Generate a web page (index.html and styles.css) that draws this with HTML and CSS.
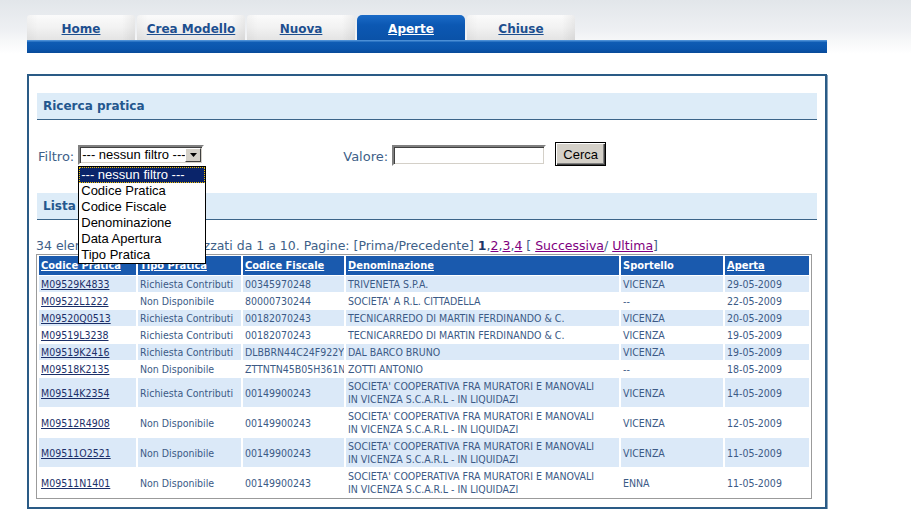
FILE: index.html
```html
<!DOCTYPE html>
<html>
<head>
<meta charset="utf-8">
<link rel="stylesheet" href="styles.css">
</head>
<body>
<div class="top">
  <div class="tabs">
    <div class="tab"><a href="#">Home</a></div>
    <div class="tab"><a href="#">Crea Modello</a></div>
    <div class="tab"><a href="#">Nuova</a></div>
    <div class="tab active"><a href="#">Aperte</a></div>
    <div class="tab"><a href="#">Chiuse</a></div>
  </div>
  <div class="bar"></div>
</div>

<div class="panel">
  <div class="section">Ricerca pratica</div>
  <div class="filters">
    <div class="group">
      <span class="label">Filtro:</span>
      <div class="select-wrap">
        <div class="select">
          <span class="select-text">--- nessun filtro ---</span>
          <span class="select-btn"><svg width="7" height="4" viewBox="0 0 7 4"><path d="M0 0h7L3.5 4z" fill="#000"/></svg></span>
        </div>
        <ul class="options">
          <li class="sel">--- nessun filtro ---</li>
          <li>Codice Pratica</li>
          <li>Codice Fiscale</li>
          <li>Denominazione</li>
          <li>Data Apertura</li>
          <li>Tipo Pratica</li>
        </ul>
      </div>
    </div>
    <div class="group valore">
      <span class="label">Valore:</span>
      <div class="input"></div>
      <div class="button">Cerca</div>
    </div>
  </div>

  <div class="section lista">Lista pratiche</div>

  <div class="pager">34 elementi trovati, visualizzati da 1 a 10. Pagine: [Prima/Precedente] <b>1</b>,<a href="#">2</a>,<a href="#">3</a>,<a href="#">4</a> [ <a href="#">Successiva</a>/ <a href="#">Ultima</a>]</div>

  <table class="grid">
    <colgroup>
      <col class="c1"><col class="c2"><col class="c3"><col class="c4"><col class="c5"><col class="c6">
    </colgroup>
    <thead>
      <tr>
        <th><a href="#">Codice Pratica</a></th>
        <th><a href="#">Tipo Pratica</a></th>
        <th><a href="#">Codice Fiscale</a></th>
        <th><a href="#">Denominazione</a></th>
        <th>Sportello</th>
        <th><a href="#">Aperta</a></th>
      </tr>
    </thead>
    <tbody>
      <tr class="alt"><td><a href="#">M09529K4833</a></td><td>Richiesta Contributi</td><td>00345970248</td><td>TRIVENETA S.P.A.</td><td>VICENZA</td><td>29-05-2009</td></tr>
      <tr><td><a href="#">M09522L1222</a></td><td>Non Disponibile</td><td>80000730244</td><td>SOCIETA' A R.L. CITTADELLA</td><td>--</td><td>22-05-2009</td></tr>
      <tr class="alt"><td><a href="#">M09520Q0513</a></td><td>Richiesta Contributi</td><td>00182070243</td><td>TECNICARREDO DI MARTIN FERDINANDO &amp; C.</td><td>VICENZA</td><td>20-05-2009</td></tr>
      <tr><td><a href="#">M09519L3238</a></td><td>Richiesta Contributi</td><td>00182070243</td><td>TECNICARREDO DI MARTIN FERDINANDO &amp; C.</td><td>VICENZA</td><td>19-05-2009</td></tr>
      <tr class="alt"><td><a href="#">M09519K2416</a></td><td>Richiesta Contributi</td><td>DLBBRN44C24F922Y</td><td>DAL BARCO BRUNO</td><td>VICENZA</td><td>19-05-2009</td></tr>
      <tr><td><a href="#">M09518K2135</a></td><td>Non Disponibile</td><td>ZTTNTN45B05H361N</td><td>ZOTTI ANTONIO</td><td>--</td><td>18-05-2009</td></tr>
      <tr class="alt"><td><a href="#">M09514K2354</a></td><td>Richiesta Contributi</td><td>00149900243</td><td>SOCIETA' COOPERATIVA FRA MURATORI E MANOVALI<br>IN VICENZA S.C.A.R.L - IN LIQUIDAZI</td><td>VICENZA</td><td>14-05-2009</td></tr>
      <tr><td><a href="#">M09512R4908</a></td><td>Non Disponibile</td><td>00149900243</td><td>SOCIETA' COOPERATIVA FRA MURATORI E MANOVALI<br>IN VICENZA S.C.A.R.L - IN LIQUIDAZI</td><td>VICENZA</td><td>12-05-2009</td></tr>
      <tr class="alt"><td><a href="#">M09511O2521</a></td><td>Non Disponibile</td><td>00149900243</td><td>SOCIETA' COOPERATIVA FRA MURATORI E MANOVALI<br>IN VICENZA S.C.A.R.L - IN LIQUIDAZI</td><td>VICENZA</td><td>11-05-2009</td></tr>
      <tr><td><a href="#">M09511N1401</a></td><td>Non Disponibile</td><td>00149900243</td><td>SOCIETA' COOPERATIVA FRA MURATORI E MANOVALI<br>IN VICENZA S.C.A.R.L - IN LIQUIDAZI</td><td>ENNA</td><td>11-05-2009</td></tr>
    </tbody>
  </table>
</div>
</body>
</html>
```

FILE: styles.css
```css
html, body {
  margin: 0;
  padding: 0;
  background: #fff;
}
body {
  font-family: "DejaVu Sans", Verdana, sans-serif;
  color: #2e4a7a;
}

.top {
  background: linear-gradient(#e2e6ea 0px, #eef0f3 30px, #f6f7f8 40px, #fff 54px);
  padding: 15px 0 0 27px;
  height: 39px;
}
.tabs {
  display: flex;
  gap: 2px;
  height: 25px;
}
.tab {
  width: 108px;
  height: 25px;
  display: flex;
  align-items: center;
  justify-content: center;
  background: linear-gradient(90deg, rgba(0,0,0,0.03), rgba(0,0,0,0) 10%, rgba(0,0,0,0) 88%, rgba(0,0,0,0.06)), linear-gradient(#fbfbfb, #f2f2f2 50%, #e4e4e4);
  border-radius: 3px 3px 0 0;
}
.tab a {
  font-weight: bold;
  font-size: 12px;
  color: #1d4f8f;
  text-decoration: underline;
  margin-top: 2px;
}
.tab.active {
  background: linear-gradient(#1b6bc7, #0c58b3 40%, #0a52a8);
  border-radius: 5px 5px 0 0;
}
.tab.active a {
  color: #fff;
}
.bar {
  width: 800px;
  height: 13px;
  background: linear-gradient(#4b8fd6 0px, #4b8fd6 1px, #0f5cb4 2px, #0a55ad 9px, #084a98 13px);
}

.panel {
  margin: 20px 0 0 27px;
  width: 780px;
  border: 2px solid #2a5b86;
  box-shadow: 1px 1px 0 #8aa6bf;
  padding: 17px 8px 8px 8px;
  box-sizing: content-box;
}
.section {
  height: 27px;
  line-height: 27px;
  background: #ddecf8;
  border-bottom: 1px solid #3b6489;
  font-weight: bold;
  font-size: 12px;
  color: #24578e;
  padding-left: 6px;
  box-sizing: border-box;
}
.filters {
  margin-top: 22px;
  height: 24px;
  display: flex;
  align-items: center;
  font-size: 13px;
}
.group {
  display: flex;
  align-items: center;
}
.label {
  color: #3e5f88;
  margin-left: 1px;
  margin-top: 4px;
}
.select-wrap {
  position: relative;
  margin-left: 4px;
  margin-top: 1px;
}
.select {
  width: 126px;
  height: 20px;
  box-sizing: border-box;
  border-style: solid;
  border-width: 2px;
  border-color: #808080 #fff #fff #808080;
  box-shadow: inset 1px 1px 0 #404040, inset -1px -1px 0 #d4d0c8;
  background: #fff;
  display: flex;
  align-items: center;
  font-family: "Liberation Sans", Arial, sans-serif;
  font-size: 13px;
  color: #000;
}
.select-text {
  flex: 1;
  padding-left: 2px;
  white-space: nowrap;
  overflow: hidden;
}
.select-btn {
  width: 16px;
  height: 14px;
  margin-right: 1px;
  background: #d4d0c8;
  border-style: solid;
  border-width: 1px;
  border-color: #fff #404040 #404040 #fff;
  box-sizing: border-box;
  display: flex;
  align-items: center;
  justify-content: center;
}
.options {
  position: absolute;
  left: 0;
  top: 21px;
  margin: 0;
  padding: 0;
  list-style: none;
  width: 128px;
  box-sizing: border-box;
  border: 1px solid #000;
  background: #fff;
  font-family: "Liberation Sans", Arial, sans-serif;
  font-size: 13px;
  color: #000;
  z-index: 5;
}
.options li {
  height: 16px;
  line-height: 15px;
  padding-left: 2px;
  white-space: nowrap;
}
.options li.sel {
  background: #0a246a;
  color: #fff;
  outline: 1px dotted #f0c000;
  outline-offset: -1px;
}
.valore {
  margin-left: 138px;
}
.valore .label {
  margin-right: 4px;
}
.input {
  width: 154px;
  height: 21px;
  box-sizing: border-box;
  border-style: solid;
  border-width: 2px;
  border-color: #808080 #fff #fff #808080;
  box-shadow: inset 1px 1px 0 #404040, inset -1px -1px 0 #d4d0c8;
  background: #fff;
  margin-top: 2px;
}
.button {
  margin-left: 9px;
  width: 51px;
  height: 24px;
  box-sizing: border-box;
  background: #d4d0c8;
  border: 1px solid #000;
  box-shadow: inset 1px 1px 0 #fff, inset -1px -1px 0 #404040, inset -2px -2px 0 #808080;
  font-family: "Liberation Sans", Arial, sans-serif;
  font-size: 13px;
  color: #000;
  display: flex;
  align-items: center;
  justify-content: center;
}

.lista {
  margin-top: 27px;
}
.pager {
  margin-top: 18px;
  height: 16px;
  line-height: 16px;
  font-size: 12.5px;
  color: #3e5f88;
  white-space: nowrap;
  margin-left: -1px;
}
.pager b {
  color: #1d3466;
}
.pager a {
  color: #800080;
}

.grid {
  margin-top: 0;
  margin-left: -1px;
  width: 774px;
  table-layout: fixed;
  border-collapse: separate;
  border-spacing: 2px 1px;
  border: 1px solid #9b9b9b;
  font-family: "DejaVu Sans Condensed", "DejaVu Sans", sans-serif;
  font-size: 10.5px;
}
.c1 { width: 97px; }
.c2 { width: 103px; }
.c3 { width: 101px; }
.c4 { width: 273px; }
.c5 { width: 102px; }
.c6 { width: 84px; }
.grid th {
  background: #1a5aae;
  color: #fff;
  text-align: left;
  font-weight: bold;
  font-size: 11px;
  height: 19px;
  padding: 0 2px;
  line-height: 19px;
  white-space: nowrap;
  overflow: hidden;
}
.grid th a {
  color: #fff;
}
.grid td {
  padding: 2px 2px 1px 2px;
  line-height: 13px;
  color: #3b5a86;
  white-space: nowrap;
  overflow: hidden;
  vertical-align: middle;
}
.grid tr.alt td {
  background: #dbe9f8;
}
.grid td a {
  color: #1b2f68;
}
```
